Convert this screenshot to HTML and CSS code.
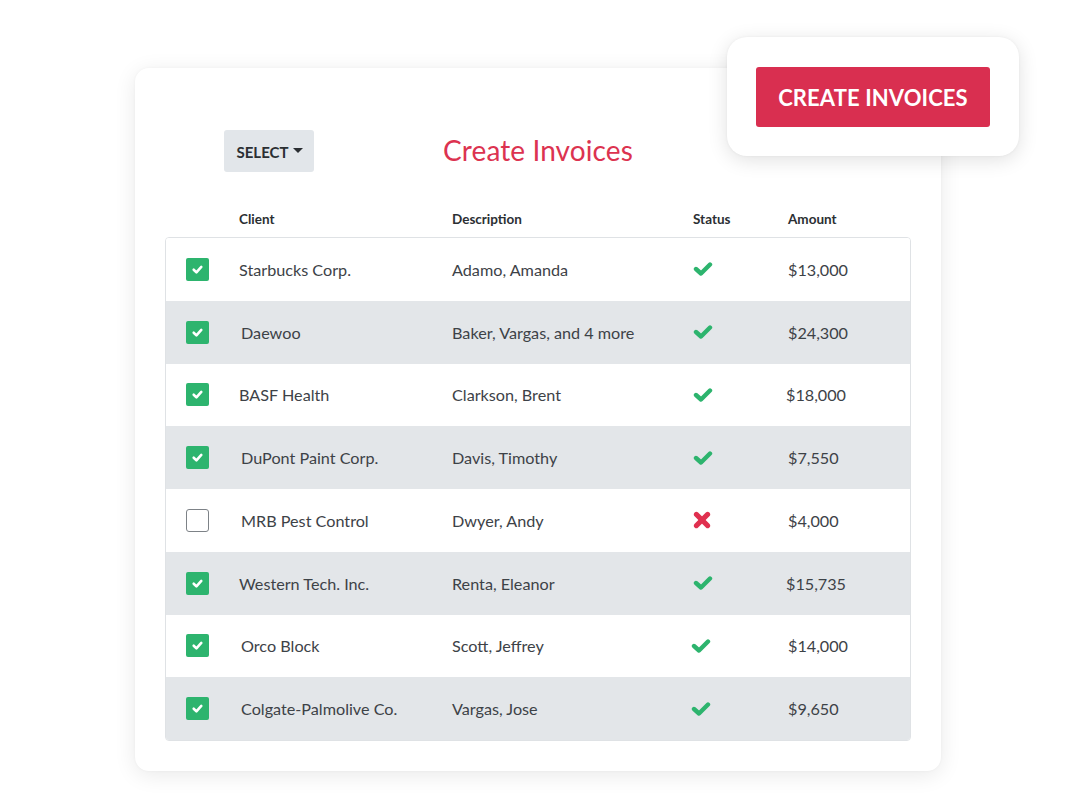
FILE: index.html
```html
<!DOCTYPE html>
<html lang="en">
<head>
<meta charset="utf-8">
<title>Create Invoices</title>
<link rel="stylesheet" href="styles.css">
</head>
<body>
<div class="stage">
  <div class="card">
    <div class="toolbar">
      <div class="toolbar-left">
        <button class="select-btn">SELECT<span class="caret"></span></button>
      </div>
      <h1 class="title">Create Invoices</h1>
      <div></div>
    </div>
    <div class="thead">
      <span></span>
      <span>Client</span>
      <span>Description</span>
      <span>Status</span>
      <span>Amount</span>
    </div>
    <div class="table">
      <div class="row">
        <span class="cell-check"><span class="cb on"><svg viewBox="0 0 12 12"><polyline points="2.5,6.2 5,8.6 9.5,3.6"/></svg></span></span>
        <span>Starbucks Corp.</span>
        <span>Adamo, Amanda</span>
        <span class="status"><svg class="ok" viewBox="0 0 20 14"><polyline points="3,7 8,11.5 17,2.5"/></svg></span>
        <span>$13,000</span>
      </div>
      <div class="row alt">
        <span class="cell-check"><span class="cb on"><svg viewBox="0 0 12 12"><polyline points="2.5,6.2 5,8.6 9.5,3.6"/></svg></span></span>
        <span class="nudge">Daewoo</span>
        <span>Baker, Vargas, and 4 more</span>
        <span class="status"><svg class="ok" viewBox="0 0 20 14"><polyline points="3,7 8,11.5 17,2.5"/></svg></span>
        <span>$24,300</span>
      </div>
      <div class="row">
        <span class="cell-check"><span class="cb on"><svg viewBox="0 0 12 12"><polyline points="2.5,6.2 5,8.6 9.5,3.6"/></svg></span></span>
        <span>BASF Health</span>
        <span>Clarkson, Brent</span>
        <span class="status"><svg class="ok" viewBox="0 0 20 14"><polyline points="3,7 8,11.5 17,2.5"/></svg></span>
        <span class="back">$18,000</span>
      </div>
      <div class="row alt">
        <span class="cell-check"><span class="cb on"><svg viewBox="0 0 12 12"><polyline points="2.5,6.2 5,8.6 9.5,3.6"/></svg></span></span>
        <span class="nudge">DuPont Paint Corp.</span>
        <span>Davis, Timothy</span>
        <span class="status"><svg class="ok" viewBox="0 0 20 14"><polyline points="3,7 8,11.5 17,2.5"/></svg></span>
        <span>$7,550</span>
      </div>
      <div class="row">
        <span class="cell-check"><span class="cb off"></span></span>
        <span class="nudge">MRB Pest Control</span>
        <span>Dwyer, Andy</span>
        <span class="status"><svg class="no" viewBox="0 0 16 16"><line x1="3" y1="3" x2="13" y2="13"/><line x1="13" y1="3" x2="3" y2="13"/></svg></span>
        <span>$4,000</span>
      </div>
      <div class="row alt">
        <span class="cell-check"><span class="cb on"><svg viewBox="0 0 12 12"><polyline points="2.5,6.2 5,8.6 9.5,3.6"/></svg></span></span>
        <span>Western Tech. Inc.</span>
        <span>Renta, Eleanor</span>
        <span class="status"><svg class="ok" viewBox="0 0 20 14"><polyline points="3,7 8,11.5 17,2.5"/></svg></span>
        <span class="back">$15,735</span>
      </div>
      <div class="row">
        <span class="cell-check"><span class="cb on"><svg viewBox="0 0 12 12"><polyline points="2.5,6.2 5,8.6 9.5,3.6"/></svg></span></span>
        <span class="nudge">Orco Block</span>
        <span>Scott, Jeffrey</span>
        <span class="status back"><svg class="ok" viewBox="0 0 20 14"><polyline points="3,7 8,11.5 17,2.5"/></svg></span>
        <span>$14,000</span>
      </div>
      <div class="row alt">
        <span class="cell-check"><span class="cb on"><svg viewBox="0 0 12 12"><polyline points="2.5,6.2 5,8.6 9.5,3.6"/></svg></span></span>
        <span class="nudge">Colgate-Palmolive Co.</span>
        <span>Vargas, Jose</span>
        <span class="status back"><svg class="ok" viewBox="0 0 20 14"><polyline points="3,7 8,11.5 17,2.5"/></svg></span>
        <span>$9,650</span>
      </div>
    </div>
  </div>
  <div class="float-card">
    <button class="create-btn">CREATE INVOICES</button>
  </div>
</div>
</body>
</html>
```

FILE: styles.css
```css
* { box-sizing: border-box; }

html, body {
  margin: 0;
  padding: 0;
  background: #ffffff;
}

body {
  font-family: "Lato", "Open Sans", "Liberation Sans", sans-serif;
  color: #3a3f44;
  width: 1080px;
  height: 810px;
  overflow: hidden;
}

.stage {
  position: relative;
  width: 1080px;
  height: 810px;
  padding: 68px 0 0 135px;
}

.card {
  width: 806px;
  height: 703px;
  background: #fff;
  border-radius: 14px;
  box-shadow: 0 4px 22px rgba(0, 0, 0, 0.09), 0 0 3px rgba(0, 0, 0, 0.04);
  padding: 62px 30px 30px 30px;
  display: flex;
  flex-direction: column;
}

.toolbar {
  display: grid;
  grid-template-columns: 1fr auto 1fr;
  align-items: center;
  height: 42px;
}

.toolbar-left {
  padding-left: 59px;
}

.select-btn {
  display: inline-flex;
  align-items: center;
  gap: 5px;
  height: 42px;
  width: 90px;
  justify-content: center;
  border: none;
  border-radius: 3px;
  background: #e2e6ea;
  font-family: inherit;
  font-weight: 700;
  font-size: 15px;
  color: #2b2f33;
  padding: 1px 0 0 2px;
}

.caret {
  width: 0;
  height: 0;
  border-left: 5px solid transparent;
  border-right: 5px solid transparent;
  border-top: 5px solid #2b2f33;
  margin-top: -2px;
}

.title {
  margin: -3px 0 0 0;
  font-weight: 400;
  font-size: 28px;
  color: #dc3350;
  letter-spacing: 0.1px;
}

.thead {
  display: grid;
  grid-template-columns: 74px 213px 241px 95px 1fr;
  margin-top: 36px;
  height: 22px;
  align-items: center;
  font-size: 13.5px;
  font-weight: 700;
  color: #2b2f33;
  margin-bottom: 7px;
}

.table {
  border: 1px solid #dfe2e5;
  border-radius: 4px;
  overflow: hidden;
  flex: 1;
  display: flex;
  flex-direction: column;
}

.row {
  display: grid;
  grid-template-columns: 73px 213px 241px 95px 1fr;
  align-items: center;
  flex: 1;
  font-size: 16.2px;
  color: #3d4247;
  background: #fff;
}

.row.alt {
  background: #e3e6e9;
}

.nudge { padding-left: 2px; }
.back { margin-left: -2px; }

.cell-check {
  padding-left: 20px;
  display: flex;
  align-items: center;
}

.cb {
  width: 23px;
  height: 23px;
  border-radius: 2px;
  display: inline-flex;
  align-items: center;
  justify-content: center;
}

.cb.on {
  background: #2db46e;
}

.cb.on svg {
  width: 13px;
  height: 13px;
  fill: none;
  stroke: #fff;
  stroke-width: 2.4;
  stroke-linecap: round;
  stroke-linejoin: round;
}

.cb.off {
  background: #fff;
  border: 1px solid #7d8287;
  border-radius: 3px;
}

.status {
  display: flex;
  align-items: center;
}

.status svg.ok {
  width: 20px;
  height: 14px;
  fill: none;
  stroke: #2db46e;
  stroke-width: 4.4;
  stroke-linecap: round;
  stroke-linejoin: round;
}

.status svg.no {
  width: 18px;
  height: 18px;
  fill: none;
  stroke: #e0304f;
  stroke-width: 4.4;
  stroke-linecap: round;
}

.float-card {
  position: absolute;
  left: 727px;
  top: 37px;
  width: 292px;
  height: 119px;
  background: #fff;
  border-radius: 20px;
  box-shadow: 0 4px 20px rgba(0, 0, 0, 0.12), 0 0 3px rgba(0, 0, 0, 0.05);
  padding: 30px 29px 29px 29px;
}

.create-btn {
  width: 234px;
  height: 60px;
  border: none;
  border-radius: 3px;
  background: #d92f50;
  color: #fff;
  font-family: inherit;
  font-weight: 700;
  font-size: 22px;
  letter-spacing: 0.1px;
  padding: 0;
}
```
